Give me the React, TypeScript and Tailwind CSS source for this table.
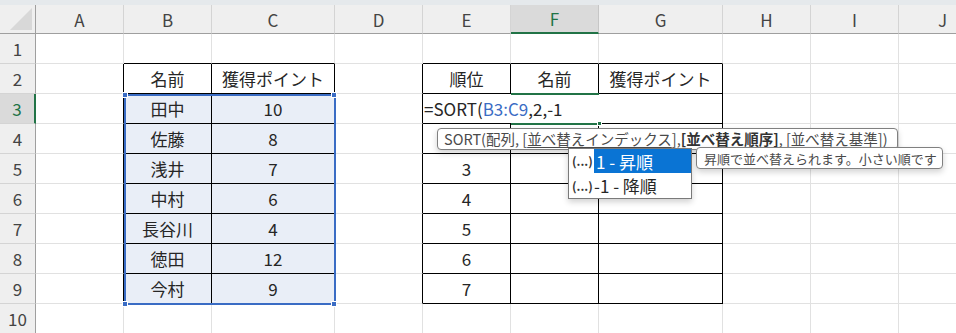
import React from 'react';

type Col = { k: string; w: string };
const COLS: Col[] = [
  { k: 'A', w: 'w-[88px]' },
  { k: 'B', w: 'w-[88px]' },
  { k: 'C', w: 'w-[123px]' },
  { k: 'D', w: 'w-[88px]' },
  { k: 'E', w: 'w-[88px]' },
  { k: 'F', w: 'w-[88px]' },
  { k: 'G', w: 'w-[124px]' },
  { k: 'H', w: 'w-[88px]' },
  { k: 'I', w: 'w-[88px]' },
  { k: 'J', w: 'w-[88px]' },
];

const DATA: Record<string, string> = {
  B2: '名前', C2: '獲得ポイント',
  B3: '田中', C3: '10',
  B4: '佐藤', C4: '8',
  B5: '浅井', C5: '7',
  B6: '中村', C6: '6',
  B7: '長谷川', C7: '4',
  B8: '徳田', C8: '12',
  B9: '今村', C9: '9',
  E2: '順位', F2: '名前', G2: '獲得ポイント',
  E5: '3', E6: '4', E7: '5', E8: '6', E9: '7',
};

const inT = (r: number, c: number) =>
  r >= 2 && r <= 9 && ((c >= 2 && c <= 3) || (c >= 5 && c <= 7));

const FONT = "font-['Noto_Sans_CJK_JP','Noto_Sans',sans-serif]";

function Cell({ r, c }: { r: number; c: number }) {
  const col = COLS[c - 1];
  if (r === 3 && c === 5) {
    return (
      <div className="w-[300px] h-full shrink-0 border-r border-b border-r-black border-b-black bg-white flex items-center pl-[1px] text-[17px] leading-none text-[#262626]">
        <span>=SORT(</span>
        <span className="text-[#3a6cc4]">B3:C9</span>
        <span>,2,-1</span>
      </div>
    );
  }
  if (r === 3 && (c === 6 || c === 7)) return null;
  const rightBlack = inT(r, c) || inT(r, c + 1);
  const bottomBlack = inT(r, c) || inT(r + 1, c);
  const sel = r >= 3 && r <= 9 && c >= 2 && c <= 3;
  const txt = DATA[`${col.k}${r}`];
  return (
    <div
      className={[
        col.w,
        'h-full shrink-0 border-r border-b flex items-center justify-center text-[17px] leading-none text-[#262626]',
        rightBlack ? 'border-r-black' : 'border-r-[#e1e1e1]',
        bottomBlack ? 'border-b-black' : 'border-b-[#e1e1e1]',
        sel ? 'bg-[#e9eef7]' : 'bg-white',
      ].join(' ')}
    >
      {txt}
    </div>
  );
}

function Row({ r }: { r: number }) {
  const active = r === 3;
  return (
    <div className="flex h-[30px]">
      <div
        className={[
          'w-[36px] h-full shrink-0 flex items-center justify-center border-b border-b-[#d4d4d4] text-[17px] leading-none',
          active
            ? 'bg-[#dadada] text-[#217346] border-r-2 border-r-[#217346]'
            : 'bg-[#efefef] text-[#444] border-r border-r-[#9f9f9f]',
        ].join(' ')}
      >
        {r}
      </div>
      {COLS.map((_, i) => (
        <Cell key={i} r={r} c={i + 1} />
      ))}
    </div>
  );
}

function Handle({ cls }: { cls: string }) {
  return <div className={`absolute w-[6px] h-[6px] bg-[#3a6cc4] border border-white ${cls}`} />;
}

export default function App() {
  return (
    <div className={`relative w-[956px] h-[333px] overflow-hidden bg-white ${FONT}`}>
      <div className="h-[5px] bg-[#e5e9ec]" />
      <div className="flex h-[29px]">
        <div className="w-[36px] h-full shrink-0 bg-[#efefef] border-r border-b border-r-[#9f9f9f] border-b-[#9f9f9f] flex items-end justify-end pr-[3px] pb-[3px]">
          <svg width="22" height="22" viewBox="0 0 22 22">
            <path d="M22 0 L22 22 L0 22 Z" fill="#d8d8d8" />
          </svg>
        </div>
        {COLS.map((c) => {
          const active = c.k === 'F';
          return (
            <div
              key={c.k}
              className={[
                c.w,
                'h-full shrink-0 flex items-center justify-center border-r text-[17px] leading-none',
                active
                  ? 'bg-[#dadada] text-[#217346] border-b-2 border-b-[#217346] border-r-[#c6c6c6]'
                  : 'bg-[#efefef] text-[#444] border-b border-b-[#9f9f9f] border-r-[#d4d4d4]',
              ].join(' ')}
            >
              {c.k}
            </div>
          );
        })}
      </div>
      {[1, 2, 3, 4, 5, 6, 7, 8, 9, 10].map((r) => (
        <Row key={r} r={r} />
      ))}

      {/* selection B3:C9 */}
      <div className="absolute left-[124px] top-[94px] w-[212px] h-[211px] border-2 border-[#3a6cc4] pointer-events-none" />
      <Handle cls="left-[122px] top-[92px]" />
      <Handle cls="left-[331px] top-[92px]" />
      <Handle cls="left-[122px] top-[301px]" />
      <Handle cls="left-[331px] top-[301px]" />

      {/* active cell indicator F3 */}
      <div className="absolute left-[511px] top-[93px] w-[88px] h-[2px] bg-[#217346]" />
      <div className="absolute left-[511px] top-[123px] w-[88px] h-[2px] bg-[#217346]" />
      <div className="absolute left-[597px] top-[121px] w-[5px] h-[5px] bg-[#217346] border border-white" />

      {/* function signature tooltip */}
      <div className="absolute left-[437px] top-[128px] w-[461px] h-[22px] bg-white border border-[#808080] rounded-[4px] shadow-[0_3px_6px_rgba(0,0,0,0.18)] flex items-center pl-[6px] text-[14.5px] leading-none text-[#4a4a4a] whitespace-nowrap">
        <span>SORT(配列, [</span>
        <span className="underline underline-offset-[2px]">並べ替えインデックス</span>
        <span>], </span>
        <span className="font-bold text-[#333]">[並べ替え順序]</span>
        <span>, [</span>
        <span className="underline underline-offset-[2px]">並べ替え基準</span>
        <span>])</span>
      </div>

      {/* autocomplete dropdown */}
      <div className="absolute left-[568px] top-[148px] w-[124px] h-[51px] bg-white border border-[#7a7a7a] shadow-[0_3px_6px_rgba(0,0,0,0.18)] flex flex-col text-[17px] leading-none text-[#262626]">
        <div className="flex h-[24px] items-center">
          <span className="w-[25px] pl-[3px] text-[12px] font-bold text-[#333]">(...)</span>
          <span className="flex-1 h-full flex items-center bg-[#0a74d4] text-white pl-[2px]">1 - 昇順</span>
        </div>
        <div className="flex h-[25px] items-center">
          <span className="w-[25px] pl-[3px] text-[12px] font-bold text-[#333]">(...)</span>
          <span className="flex-1">-1 - 降順</span>
        </div>
      </div>

      {/* description tooltip */}
      <div className="absolute left-[696px] top-[147px] w-[247px] h-[22px] bg-white border border-[#808080] rounded-[4px] shadow-[0_3px_6px_rgba(0,0,0,0.18)] flex items-center pl-[7px] text-[13px] leading-none text-[#4a4a4a] whitespace-nowrap">
        昇順で並べ替えられます。小さい順です
      </div>
    </div>
  );
}
